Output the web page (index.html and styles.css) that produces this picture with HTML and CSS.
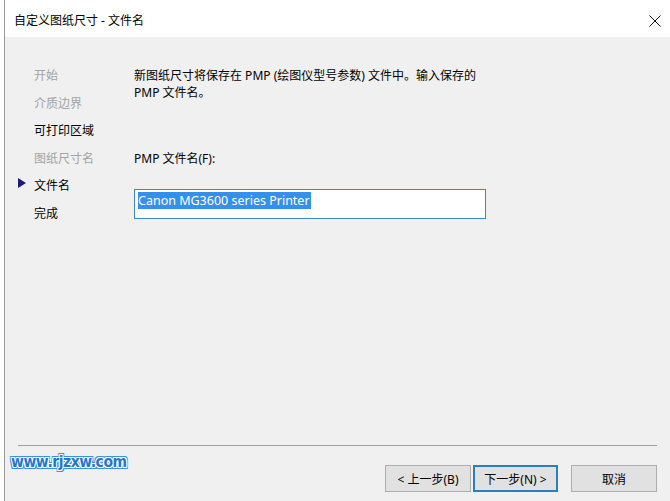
FILE: index.html
```html
<!DOCTYPE html>
<html lang="zh-CN">
<head>
<meta charset="utf-8">
<title>自定义图纸尺寸 - 文件名</title>
<link rel="stylesheet" href="styles.css">
</head>
<body>
<div class="frame">
  <div class="window">
    <div class="titlebar">
      <span class="title">自定义图纸尺寸 - 文件名</span>
      <svg class="close" width="12" height="12" viewBox="0 0 12 12"><path d="M0.5 0.5 L11.5 11.5 M11.5 0.5 L0.5 11.5" stroke="#111" stroke-width="1" fill="none"/></svg>
    </div>
    <div class="body">
      <div class="main">
        <ul class="steps">
          <li class="step done">开始</li>
          <li class="step done">介质边界</li>
          <li class="step">可打印区域</li>
          <li class="step done">图纸尺寸名</li>
          <li class="step current">
            <svg class="arrow" width="8" height="10" viewBox="0 0 8 10"><path d="M0 0 L8 5 L0 10 Z" fill="#1a1a80"/></svg>文件名</li>
          <li class="step">完成</li>
        </ul>
        <div class="content">
          <p class="desc">新图纸尺寸将保存在 PMP (绘图仪型号参数) 文件中。输入保存的<br>PMP 文件名。</p>
          <label class="label">PMP 文件名(F):</label>
          <div class="input"><span class="sel">Canon MG3600 series Printer</span></div>
        </div>
      </div>
      <div class="footer">
        <div class="sep"></div>
        <div class="buttons">
          <button class="btn">&lt; 上一步(B)</button>
          <button class="btn default">下一步(N) &gt;</button>
          <button class="btn cancel">取消</button>
        </div>
      </div>
      <div class="watermark">www.rjzxw.com</div>
    </div>
  </div>
</div>
</body>
</html>
```
FILE: styles.css
```css
html, body {
  margin: 0;
  padding: 0;
  background: #ffffff;
}
body {
  width: 670px;
  height: 501px;
  overflow: hidden;
  font-family: "Noto Sans", "Noto Sans CJK SC", sans-serif;
  font-size: 12px;
  color: #000;
}
.frame {
  padding-left: 4px;
  height: 501px;
  box-sizing: border-box;
}
.window {
  border-left: 1px solid #9a9a9a;
  height: 100%;
  display: flex;
  flex-direction: column;
  position: relative;
}
.titlebar {
  height: 37px;
  background: #fff;
  display: flex;
  align-items: center;
  justify-content: space-between;
  padding: 5px 9px 0 9px;
  box-sizing: border-box;
  flex: none;
}
.title {
  font-size: 12px;
  line-height: 16px;
}
.body {
  flex: 1;
  background: #f0f0f0;
  display: flex;
  flex-direction: column;
}
.main {
  flex: 1;
  display: flex;
}
.steps {
  list-style: none;
  margin: 0;
  padding: 25px 0 0 0;
  width: 129px;
}
.step {
  height: 27.6px;
  line-height: 27.6px;
  padding-left: 29px;
  position: relative;
  white-space: nowrap;
}
.step.done {
  color: #a3a3a3;
}
.arrow {
  position: absolute;
  left: 13px;
  top: 6px;
}
.content {
  padding-top: 30px;
  display: flex;
  flex-direction: column;
  align-items: flex-start;
}
.desc {
  margin: 0;
  line-height: 17px;
}
.label {
  margin-top: 49px;
  line-height: 17px;
}
.input {
  margin-top: 22px;
  width: 352px;
  height: 30px;
  box-sizing: border-box;
  border: 1px solid #3c85c6;
  background: #fff;
  padding: 2px 0 0 3px;
}
.sel {
  display: inline-block;
  background: #3390ec;
  color: #fff;
  font-size: 12.5px;
  line-height: 17px;
  height: 17px;
  padding-right: 1px;
}
.footer {
  flex: none;
  padding: 0 15px 9px 13px;
}
.sep {
  height: 1px;
  background: #a0a0a0;
  margin-right: -2px;
}
.buttons {
  margin-top: 19px;
  display: flex;
  justify-content: flex-end;
}
.btn {
  width: 86px;
  height: 27px;
  box-sizing: border-box;
  border: 1px solid #adadad;
  background: #e1e1e1;
  font-family: inherit;
  font-size: 12px;
  color: #000;
  padding: 0;
  margin-right: -2px;
}
.btn.default {
  width: 85px;
  margin-left: 4px;
  border: 2px solid #2a7fc0;
}
.btn.cancel {
  margin-left: 15px;
}
.watermark {
  position: absolute;
  left: 6px;
  top: 452px;
  font-family: "DejaVu Sans", sans-serif;
  font-weight: bold;
  font-size: 16px;
  letter-spacing: -0.5px;
  transform: scaleX(0.87);
  transform-origin: left top;
  color: #1f78cc;
  text-shadow:
    1px 0 0 #fff, -1px 0 0 #fff, 0 1px 0 #fff, 0 -1px 0 #fff,
    1px 1px 0 #fff, -1px -1px 0 #fff, 1px -1px 0 #fff, -1px 1px 0 #fff,
    2px 0 0 #3d8fdc, -2px 0 0 #3d8fdc, 0 2px 0 #3d8fdc, 0 -2px 0 #3d8fdc,
    2px 2px 0 #3d8fdc, -2px -2px 0 #3d8fdc, 2px -2px 0 #3d8fdc, -2px 2px 0 #3d8fdc;
}
```
